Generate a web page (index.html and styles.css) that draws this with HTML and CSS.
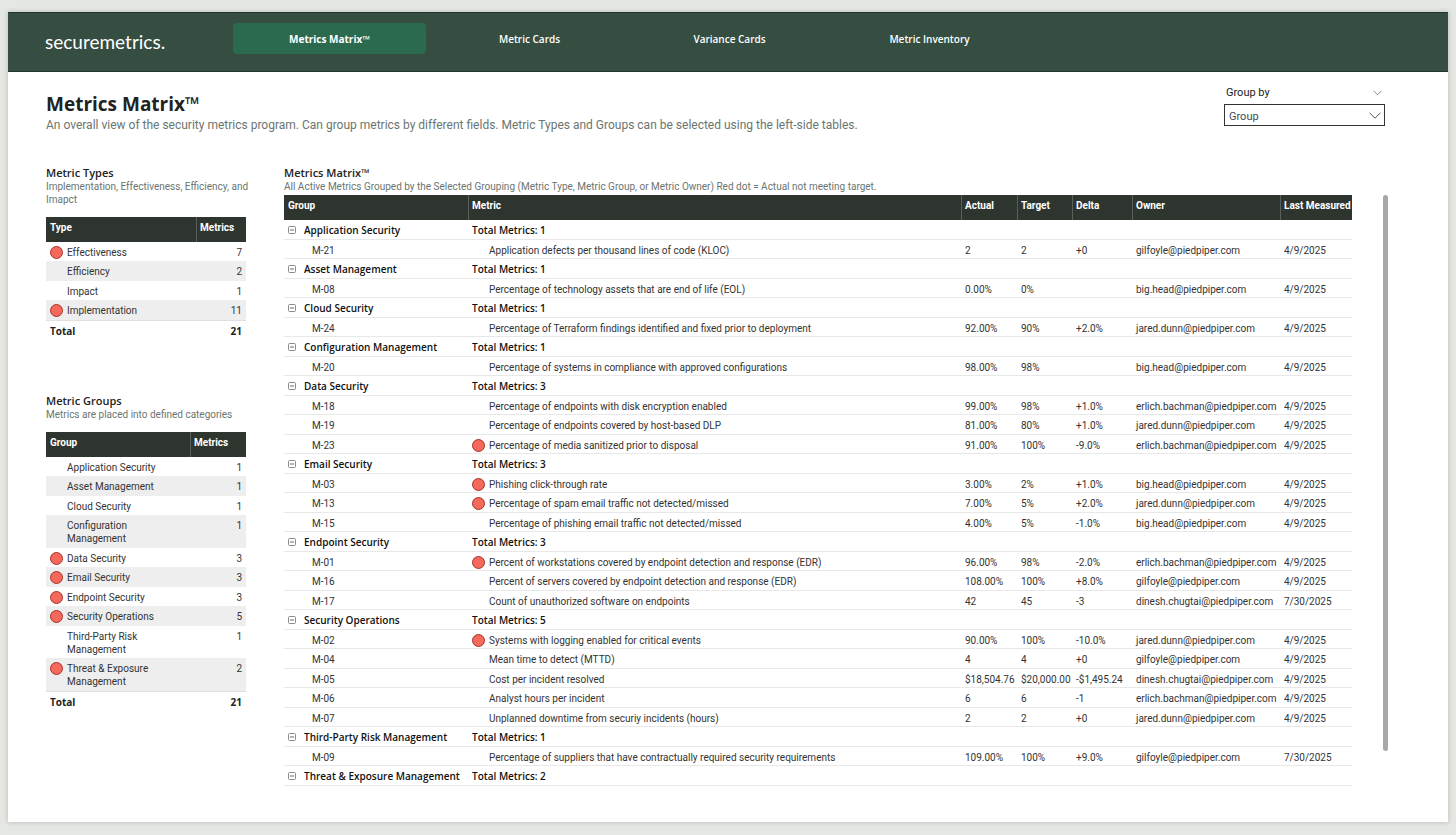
FILE: index.html
```
<!DOCTYPE html>
<html lang="en">
<head>
    <meta charset="UTF-8">
    <meta name="viewport" content="width=device-width, initial-scale=1.0">
    <title>Metrics Matrix</title>
    <link rel="stylesheet" href="styles.css">
</head>
<body>
    <svg class="defs" aria-hidden="true">
        <symbol id="collapse" viewBox="0 0 9 9">
            <rect x="0.5" y="0.5" width="7" height="7" rx="1" fill="none" stroke="#8a8a8a"/>
            <path d="M2 4h4" stroke="#666"/>
        </symbol>
    </svg>

    <div class="report">
        <header class="topbar">
            <a class="logo" href="#">securemetrics.</a>
            <nav class="tabs">
                <a class="tab active" href="#">Metrics Matrix™</a>
                <a class="tab" href="#">Metric Cards</a>
                <a class="tab" href="#">Variance Cards</a>
                <a class="tab" href="#">Metric Inventory</a>
            </nav>
        </header>

        <main class="content">
            <div class="page-head">
                <div>
                    <h1>Metrics Matrix™</h1>
                    <p>An overall view of the security metrics program. Can group metrics by different fields. Metric Types and Groups can be selected using the left-side tables.</p>
                </div>
                <div class="slicer">
                    <div class="slicer-head">
                        <label for="group-by">Group by</label>
                        <svg width="9" height="6" viewBox="0 0 9 6"><path d="M0.5 0.8l4 4 4-4" fill="none" stroke="#888"/></svg>
                    </div>
                    <div class="slicer-box">
                        <select id="group-by">
                            <option>Group</option>
                            <option>Metric Type</option>
                            <option>Owner</option>
                        </select>
                        <svg class="caret" width="12" height="7" viewBox="0 0 12 7"><path d="M0.5 0.7l5.5 5.5 5.5-5.5" fill="none" stroke="#555"/></svg>
                    </div>
                </div>
            </div>

            <div class="columns">
                <aside class="sidebar">
                    <section>
                        <h2>Metric Types</h2>
                        <p class="sub">Implementation, Effectiveness, Efficiency, and Imapct</p>
                        <table class="summary types">
                            <thead>
                                <tr><th>Type</th><th>Metrics</th></tr>
                            </thead>
                            <tbody>
                                <tr><td><div class="name"><i class="dot red"></i>Effectiveness</div></td><td>7</td></tr>
                                <tr><td><div class="name"><i class="dot"></i>Efficiency</div></td><td>2</td></tr>
                                <tr><td><div class="name"><i class="dot"></i>Impact</div></td><td>1</td></tr>
                                <tr><td><div class="name"><i class="dot red"></i>Implementation</div></td><td>11</td></tr>
                            </tbody>
                            <tfoot>
                                <tr><td>Total</td><td>21</td></tr>
                            </tfoot>
                        </table>
                    </section>

                    <section>
                        <h2>Metric Groups</h2>
                        <p class="sub">Metrics are placed into defined categories</p>
                        <table class="summary groups">
                            <thead>
                                <tr><th>Group</th><th>Metrics</th></tr>
                            </thead>
                            <tbody>
                                <tr><td><div class="name"><i class="dot"></i>Application Security</div></td><td>1</td></tr>
                                <tr><td><div class="name"><i class="dot"></i>Asset Management</div></td><td>1</td></tr>
                                <tr><td><div class="name"><i class="dot"></i>Cloud Security</div></td><td>1</td></tr>
                                <tr><td><div class="name"><i class="dot"></i>Configuration Management</div></td><td>1</td></tr>
                                <tr><td><div class="name"><i class="dot red"></i>Data Security</div></td><td>3</td></tr>
                                <tr><td><div class="name"><i class="dot red"></i>Email Security</div></td><td>3</td></tr>
                                <tr><td><div class="name"><i class="dot red"></i>Endpoint Security</div></td><td>3</td></tr>
                                <tr><td><div class="name"><i class="dot red"></i>Security Operations</div></td><td>5</td></tr>
                                <tr><td><div class="name"><i class="dot"></i>Third-Party Risk Management</div></td><td>1</td></tr>
                                <tr><td><div class="name"><i class="dot red"></i>Threat &amp; Exposure Management</div></td><td>2</td></tr>
                            </tbody>
                            <tfoot>
                                <tr><td>Total</td><td>21</td></tr>
                            </tfoot>
                        </table>
                    </section>
                </aside>

                <section class="matrix-panel">
                    <h2>Metrics Matrix™</h2>
                    <p class="sub">All Active Metrics Grouped by the Selected Grouping (Metric Type, Metric Group, or Metric Owner) Red dot = Actual not meeting target.</p>
                    <div class="matrix-scroll">
                        <table class="matrix">
                            <colgroup>
                                <col class="c-group"><col><col class="c-actual"><col class="c-target"><col class="c-delta"><col class="c-owner"><col class="c-date">
                            </colgroup>
                            <thead>
                                <tr><th>Group</th><th>Metric</th><th>Actual</th><th>Target</th><th>Delta</th><th>Owner</th><th>Last Measured</th></tr>
                            </thead>
                            <tbody>
                                <tr class="group"><td><button aria-label="Collapse"><svg><use href="#collapse"/></svg></button>Application Security</td><td>Total Metrics: 1</td><td colspan="5"></td></tr>
                                <tr><td>M-21</td><td><div class="name"><i class="dot"></i>Application defects per thousand lines of code (KLOC)</div></td><td>2</td><td>2</td><td>+0</td><td>gilfoyle@piedpiper.com</td><td>4/9/2025</td></tr>
                                <tr class="group"><td><button aria-label="Collapse"><svg><use href="#collapse"/></svg></button>Asset Management</td><td>Total Metrics: 1</td><td colspan="5"></td></tr>
                                <tr><td>M-08</td><td><div class="name"><i class="dot"></i>Percentage of technology assets that are end of life (EOL)</div></td><td>0.00%</td><td>0%</td><td></td><td>big.head@piedpiper.com</td><td>4/9/2025</td></tr>
                                <tr class="group"><td><button aria-label="Collapse"><svg><use href="#collapse"/></svg></button>Cloud Security</td><td>Total Metrics: 1</td><td colspan="5"></td></tr>
                                <tr><td>M-24</td><td><div class="name"><i class="dot"></i>Percentage of Terraform findings identified and fixed prior to deployment</div></td><td>92.00%</td><td>90%</td><td>+2.0%</td><td>jared.dunn@piedpiper.com</td><td>4/9/2025</td></tr>
                                <tr class="group"><td><button aria-label="Collapse"><svg><use href="#collapse"/></svg></button>Configuration Management</td><td>Total Metrics: 1</td><td colspan="5"></td></tr>
                                <tr><td>M-20</td><td><div class="name"><i class="dot"></i>Percentage of systems in compliance with approved configurations</div></td><td>98.00%</td><td>98%</td><td></td><td>big.head@piedpiper.com</td><td>4/9/2025</td></tr>
                                <tr class="group"><td><button aria-label="Collapse"><svg><use href="#collapse"/></svg></button>Data Security</td><td>Total Metrics: 3</td><td colspan="5"></td></tr>
                                <tr><td>M-18</td><td><div class="name"><i class="dot"></i>Percentage of endpoints with disk encryption enabled</div></td><td>99.00%</td><td>98%</td><td>+1.0%</td><td>erlich.bachman@piedpiper.com</td><td>4/9/2025</td></tr>
                                <tr><td>M-19</td><td><div class="name"><i class="dot"></i>Percentage of endpoints covered by host-based DLP</div></td><td>81.00%</td><td>80%</td><td>+1.0%</td><td>jared.dunn@piedpiper.com</td><td>4/9/2025</td></tr>
                                <tr><td>M-23</td><td><div class="name"><i class="dot red"></i>Percentage of media sanitized prior to disposal</div></td><td>91.00%</td><td>100%</td><td>-9.0%</td><td>erlich.bachman@piedpiper.com</td><td>4/9/2025</td></tr>
                                <tr class="group"><td><button aria-label="Collapse"><svg><use href="#collapse"/></svg></button>Email Security</td><td>Total Metrics: 3</td><td colspan="5"></td></tr>
                                <tr><td>M-03</td><td><div class="name"><i class="dot red"></i>Phishing click-through rate</div></td><td>3.00%</td><td>2%</td><td>+1.0%</td><td>big.head@piedpiper.com</td><td>4/9/2025</td></tr>
                                <tr><td>M-13</td><td><div class="name"><i class="dot red"></i>Percentage of spam email traffic not detected/missed</div></td><td>7.00%</td><td>5%</td><td>+2.0%</td><td>jared.dunn@piedpiper.com</td><td>4/9/2025</td></tr>
                                <tr><td>M-15</td><td><div class="name"><i class="dot"></i>Percentage of phishing email traffic not detected/missed</div></td><td>4.00%</td><td>5%</td><td>-1.0%</td><td>big.head@piedpiper.com</td><td>4/9/2025</td></tr>
                                <tr class="group"><td><button aria-label="Collapse"><svg><use href="#collapse"/></svg></button>Endpoint Security</td><td>Total Metrics: 3</td><td colspan="5"></td></tr>
                                <tr><td>M-01</td><td><div class="name"><i class="dot red"></i>Percent of workstations covered by endpoint detection and response (EDR)</div></td><td>96.00%</td><td>98%</td><td>-2.0%</td><td>erlich.bachman@piedpiper.com</td><td>4/9/2025</td></tr>
                                <tr><td>M-16</td><td><div class="name"><i class="dot"></i>Percent of servers covered by endpoint detection and response (EDR)</div></td><td>108.00%</td><td>100%</td><td>+8.0%</td><td>gilfoyle@piedpiper.com</td><td>4/9/2025</td></tr>
                                <tr><td>M-17</td><td><div class="name"><i class="dot"></i>Count of unauthorized software on endpoints</div></td><td>42</td><td>45</td><td>-3</td><td>dinesh.chugtai@piedpiper.com</td><td>7/30/2025</td></tr>
                                <tr class="group"><td><button aria-label="Collapse"><svg><use href="#collapse"/></svg></button>Security Operations</td><td>Total Metrics: 5</td><td colspan="5"></td></tr>
                                <tr><td>M-02</td><td><div class="name"><i class="dot red"></i>Systems with logging enabled for critical events</div></td><td>90.00%</td><td>100%</td><td>-10.0%</td><td>jared.dunn@piedpiper.com</td><td>4/9/2025</td></tr>
                                <tr><td>M-04</td><td><div class="name"><i class="dot"></i>Mean time to detect (MTTD)</div></td><td>4</td><td>4</td><td>+0</td><td>gilfoyle@piedpiper.com</td><td>4/9/2025</td></tr>
                                <tr><td>M-05</td><td><div class="name"><i class="dot"></i>Cost per incident resolved</div></td><td>$18,504.76</td><td>$20,000.00</td><td>-$1,495.24</td><td>dinesh.chugtai@piedpiper.com</td><td>4/9/2025</td></tr>
                                <tr><td>M-06</td><td><div class="name"><i class="dot"></i>Analyst hours per incident</div></td><td>6</td><td>6</td><td>-1</td><td>erlich.bachman@piedpiper.com</td><td>4/9/2025</td></tr>
                                <tr><td>M-07</td><td><div class="name"><i class="dot"></i>Unplanned downtime from securiy incidents (hours)</div></td><td>2</td><td>2</td><td>+0</td><td>jared.dunn@piedpiper.com</td><td>4/9/2025</td></tr>
                                <tr class="group"><td><button aria-label="Collapse"><svg><use href="#collapse"/></svg></button>Third-Party Risk Management</td><td>Total Metrics: 1</td><td colspan="5"></td></tr>
                                <tr><td>M-09</td><td><div class="name"><i class="dot"></i>Percentage of suppliers that have contractually required security requirements</div></td><td>109.00%</td><td>100%</td><td>+9.0%</td><td>gilfoyle@piedpiper.com</td><td>7/30/2025</td></tr>
                                <tr class="group"><td><button aria-label="Collapse"><svg><use href="#collapse"/></svg></button>Threat &amp; Exposure Management</td><td>Total Metrics: 2</td><td colspan="5"></td></tr>
                            </tbody>
                        </table>
                        <div class="track"><div class="thumb"></div></div>
                    </div>
                </section>
            </div>
        </main>
    </div>
</body>
</html>
```
FILE: styles.css
```
* {
    box-sizing: border-box;
}
body {
    margin: 0;
    padding: 12px 8px;
    background: #e4e7e2;
    font-family: Roboto, "Open Sans", sans-serif;
    font-size: 10px;
    line-height: 13px;
    color: #333;
}
h1, h2, p {
    margin: 0;
}
.defs {
    display: none;
}
.report {
    background: #fff;
    box-shadow: 0 0 5px rgba(0,0,0,0.2);
}

/* top bar */
.topbar {
    display: flex;
    align-items: flex-start;
    height: 60px;
    padding-left: 37px;
    background: #354e41;
    border-top: 1px solid #22382d;
    border-bottom: 1px solid #22382d;
}
.logo {
    width: 188px;
    padding-top: 16px;
    font-family: Lato, sans-serif;
    font-weight: 400;
    font-size: 19px;
    line-height: 26px;
    color: #fff;
    text-decoration: none;
}
.tabs {
    display: flex;
    gap: 7px;
    padding-top: 10px;
}
.tab {
    width: 193px;
    padding-top: 2px;
    border-radius: 4px;
    font-family: "Open Sans", sans-serif;
    font-size: 10px;
    font-weight: 600;
    line-height: 29px;
    text-align: center;
    color: #fff;
    text-decoration: none;
}
.tab.active {
    background: #2c6a4f;
    font-weight: 700;
}

/* page heading */
.content {
    padding: 14px 60px 36px 38px;
}
.page-head {
    display: flex;
    justify-content: space-between;
    margin-bottom: 34px;
    padding-right: 3px;
}
h1 {
    padding-top: 6px;
    font-family: "Open Sans", sans-serif;
    font-size: 19px;
    line-height: 24px;
    color: #222;
}
.page-head p {
    padding-top: 2px;
    font-size: 12px;
    line-height: 14px;
    color: #6b756f;
}
.slicer {
    width: 161px;
    margin-top: -3px;
}
.slicer-head {
    display: flex;
    justify-content: space-between;
    align-items: center;
    height: 21px;
    padding: 0 3px 2px 2px;
    font-size: 11px;
    color: #222;
}
.slicer-box {
    position: relative;
}
.slicer select {
    display: block;
    width: 100%;
    height: 22px;
    padding: 2px 4px 0;
    appearance: none;
    border: 1px solid #333;
    border-radius: 0;
    background: #fff;
    font: inherit;
    font-size: 11px;
    color: #444a55;
}
.caret {
    position: absolute;
    right: 4px;
    top: 8px;
    pointer-events: none;
}

/* two column layout */
.columns {
    display: flex;
    gap: 38px;
}
.sidebar {
    width: 200px;
    flex: none;
}
.sidebar section + section {
    margin-top: 54px;
}
.sidebar .sub {
    margin-right: -8px;
}
.matrix-panel {
    flex: 1;
    min-width: 0;
}
h2 {
    font-family: "Open Sans", sans-serif;
    font-size: 11px;
    font-weight: 600;
    line-height: 14px;
    color: #222;
}
.sub {
    color: #6b756f;
}

/* tables */
table {
    width: 100%;
    table-layout: fixed;
    border-collapse: separate;
    border-spacing: 0;
}
th {
    height: 25px;
    padding: 4px;
    background: #2e352e;
    color: #fff;
    font-weight: 700;
    text-align: left;
    vertical-align: top;
    white-space: nowrap;
}
th + th {
    border-left: 1px solid #59605a;
    padding: 4px 0 4px 3px;
}
td {
    padding: 4px 4px 2px;
    vertical-align: top;
}
.name {
    display: flex;
    gap: 4px;
}
.dot {
    flex: none;
    width: 13px;
    height: 13px;
    border-radius: 50%;
}
.dot.red {
    background: #f4695c;
    border: 1px solid #a83228;
}

.summary {
    margin-top: 11px;
}
.types th:first-child {
    width: 150px;
}
.groups th:first-child {
    width: 144px;
}
.groups .name {
    padding-right: 20px;
}
.summary td:last-child {
    text-align: right;
}
.summary tbody tr:nth-child(even) td {
    padding-bottom: 3px;
    background: #eee;
}
.summary tfoot td {
    border-top: 1px solid #e0e0e0;
    font-family: "Open Sans", sans-serif;
    font-weight: 700;
    color: #222;
}

.matrix-scroll {
    display: flex;
    gap: 31px;
    margin-top: 2px;
}
.matrix {
    flex: 1;
}
.c-group { width: 184px; }
.c-actual { width: 56px; }
.c-target { width: 55px; }
.c-delta { width: 60px; }
.c-owner { width: 148px; }
.c-date { width: 72px; }
.matrix td {
    height: 19px;
    padding: 4px 0 1px 4px;
    border-bottom: 1px solid #e8e8e8;
    white-space: nowrap;
}
.matrix tr:nth-child(odd) td {
    height: 20px;
}
.matrix td:first-child {
    padding-left: 28px;
}
.matrix .group td {
    font-family: "Open Sans", sans-serif;
    font-weight: 600;
    color: #111;
}
.matrix .group td:first-child {
    padding-left: 4px;
}
.matrix button {
    width: 16px;
    height: 8px;
    padding: 0;
    border: 0;
    background: none;
    text-align: left;
}
.matrix button svg {
    display: block;
    width: 9px;
    height: 9px;
}
.track {
    width: 5px;
}
.thumb {
    height: 94%;
    border-radius: 3px;
    background: #aaa8a7;
}
```
